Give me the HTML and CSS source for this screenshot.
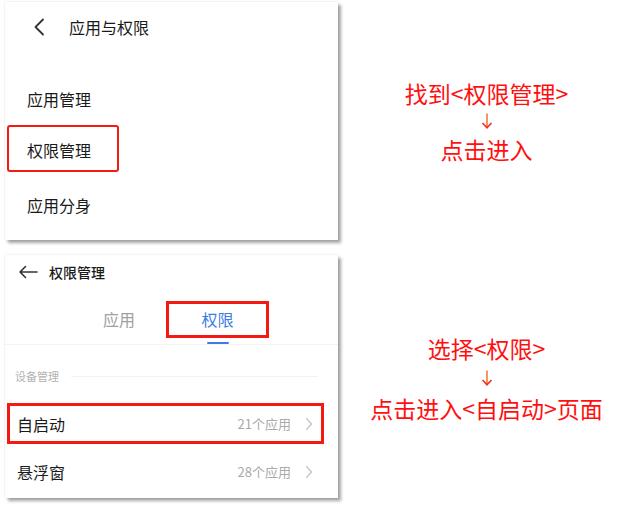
FILE: index.html
```html
<!DOCTYPE html>
<html lang="zh-CN">

<head>
  <meta charset="UTF-8">
  <meta name="viewport" content="width=device-width, initial-scale=1.0">
  <title>权限管理</title>
  <link rel="stylesheet" href="styles.css">
</head>

<body>
  <div class="page">
    <!-- 左侧截图 -->
    <div class="shots">
      <div class="card card-one">
        <div class="bar">
          <svg class="back" width="12" height="18" viewBox="0 0 12 18">
            <polyline points="10,1.5 2.5,9 10,16.5" fill="none" stroke="#333" stroke-width="1.8" stroke-linecap="round" stroke-linejoin="round" />
          </svg>
          <span class="bar-title">应用与权限</span>
        </div>
        <div class="menu">
          <div class="menu-row"><span class="menu-text">应用管理</span></div>
          <div class="menu-row"><span class="menu-text mark">权限管理</span></div>
          <div class="menu-row"><span class="menu-text">应用分身</span></div>
        </div>
      </div>

      <div class="card card-two">
        <div class="head">
          <svg class="arrow-back" width="20" height="14" viewBox="0 0 20 14">
            <path d="M19 7H2M7.5 1.5L2 7l5.5 5.5" fill="none" stroke="#333" stroke-width="1.6" stroke-linecap="round" stroke-linejoin="round" />
          </svg>
          <span class="head-title">权限管理</span>
        </div>
        <div class="tabs">
          <div class="tab">应用</div>
          <div class="tab active">
            <div class="tab-box">权限</div>
            <div class="tab-line"></div>
          </div>
        </div>
        <div class="section">
          <span class="section-name">设备管理</span>
          <span class="section-rule"></span>
        </div>
        <div class="perm mark-wide">
          <span class="perm-name">自启动</span>
          <span class="perm-count">21个应用</span>
          <svg class="more" width="8" height="14" viewBox="0 0 8 14">
            <polyline points="1.5,1.5 6.5,7 1.5,12.5" fill="none" stroke="#c4c4c4" stroke-width="1.2" stroke-linecap="round" stroke-linejoin="round" />
          </svg>
        </div>
        <div class="perm plain">
          <span class="perm-name">悬浮窗</span>
          <span class="perm-count">28个应用</span>
          <svg class="more" width="8" height="14" viewBox="0 0 8 14">
            <polyline points="1.5,1.5 6.5,7 1.5,12.5" fill="none" stroke="#c4c4c4" stroke-width="1.2" stroke-linecap="round" stroke-linejoin="round" />
          </svg>
        </div>
      </div>
    </div>

    <!-- 右侧说明 -->
    <div class="notes">
      <div class="step step-one">
        <div class="line">找到&lt;权限管理&gt;</div>
        <div class="line down">
          <svg width="12" height="16" viewBox="0 0 12 16">
            <path d="M6 0.5V14.5" stroke="#f47a3c" stroke-width="1.6" />
            <path d="M1.5 10L6 14.8 10.5 10" fill="none" stroke="#f03020" stroke-width="1.6" />
          </svg>
        </div>
        <div class="line">点击进入</div>
      </div>
      <div class="step step-two">
        <div class="line">选择&lt;权限&gt;</div>
        <div class="line down">
          <svg width="12" height="16" viewBox="0 0 12 16">
            <path d="M6 0.5V14.5" stroke="#f47a3c" stroke-width="1.6" />
            <path d="M1.5 10L6 14.8 10.5 10" fill="none" stroke="#f03020" stroke-width="1.6" />
          </svg>
        </div>
        <div class="line">点击进入&lt;自启动&gt;页面</div>
      </div>
    </div>
  </div>
</body>

</html>
```

FILE: styles.css
```css
body {
  margin: 0;
  background-color: #fff;
  font-family: 'Noto Sans CJK SC', 'Noto Sans', sans-serif;
  color: #1a1a1a;
}

.page {
  display: flex;
  width: 628px;
  height: 506px;
}

.shots {
  width: 345px;
  padding: 2px 0 0 5px;
  box-sizing: border-box;
}

.card {
  width: 333px;
  background-color: #fff;
  box-shadow: 0 0 2px rgba(0, 0, 0, 0.12), 3px 3px 3px rgba(0, 0, 0, 0.35);
}

/* 第一张图 */
.card-one {
  height: 238px;
}

.bar {
  display: flex;
  align-items: center;
  height: 50px;
  padding-left: 28px;
}

.bar-title {
  margin-left: 24px;
  font-size: 16px;
  line-height: 20px;
}

.menu {
  padding-top: 20px;
}

.menu-row {
  display: flex;
  align-items: center;
  height: 53px;
  padding-left: 22px;
}

.menu-text {
  font-size: 16px;
  line-height: 20px;
}

.menu-row .mark {
  align-self: flex-start;
  display: flex;
  align-items: center;
  width: 112px;
  height: 47px;
  margin-left: -20px;
  padding: 2px 0 0 18px;
  box-sizing: border-box;
  border: 2px solid #f41a12;
  border-radius: 3px;
}

/* 第二张图 */
.card-two {
  height: 243px;
  margin-top: 15px;
}

.head {
  display: flex;
  align-items: center;
  height: 34px;
  padding-left: 13px;
}

.head-title {
  margin-left: 11px;
  font-size: 14px;
  font-weight: 500;
  line-height: 18px;
}

.tabs {
  display: flex;
  height: 55px;
  padding-left: 67px;
  border-bottom: 1px solid #f3f3f3;
}

.tab {
  width: 94px;
  padding-top: 12px;
  font-size: 16px;
  line-height: 37px;
  text-align: center;
  color: #a0a0a0;
}

.tab.active {
  width: 103px;
  display: flex;
  flex-direction: column;
  align-items: center;
}

.tab-box {
  width: 103px;
  height: 37px;
  box-sizing: border-box;
  border: 3px solid #f41a12;
  line-height: 31px;
  color: #3d7ce6;
}

.tab-line {
  width: 22px;
  height: 3px;
  margin-top: 4px;
  border-radius: 2px;
  background-color: #3d7ce6;
}

.section {
  display: flex;
  align-items: center;
  padding: 24px 20px 0 10px;
  height: 14px;
}

.section-name {
  font-size: 11px;
  line-height: 14px;
  color: #b2b2b2;
}

.section-rule {
  flex: 1;
  height: 1px;
  margin-left: 12px;
  background-color: #f2f2f2;
}

.perm {
  display: flex;
  align-items: center;
  width: 317px;
  margin-left: 2px;
  box-sizing: border-box;
  border: 3px solid transparent;
  padding: 0 8px 0 7px;
}

.perm.mark-wide {
  height: 41px;
  margin-top: 20px;
  border-color: #f41a12;
}

.perm.plain {
  height: 48px;
  margin-top: 4px;
}

.perm-name {
  flex: 1;
  font-size: 16px;
  line-height: 20px;
}

.perm-count {
  font-size: 13px;
  line-height: 16px;
  color: #aaa;
}

.more {
  margin-left: 14px;
}

/* 右侧说明 */
.notes {
  flex: 1;
  padding-top: 79px;
  color: #ff1010;
  font-size: 23px;
  text-align: center;
}

.step-one .line {
  height: 28px;
  line-height: 28px;
}

.step-two {
  margin-top: 170px;
}

.step-two .line {
  height: 30px;
  line-height: 30px;
}

.down {
  display: flex;
  align-items: center;
  justify-content: center;
}
```
